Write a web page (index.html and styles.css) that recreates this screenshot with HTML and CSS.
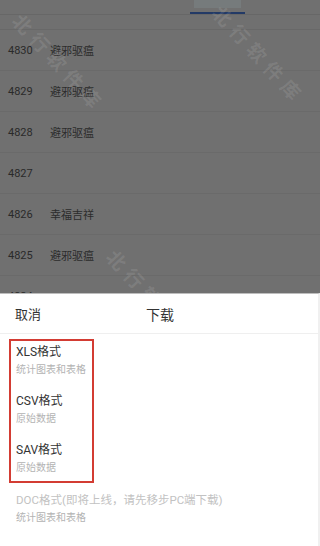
FILE: index.html
```html
<!DOCTYPE html>
<html lang="zh-CN">
<head>
<meta charset="utf-8">
<link rel="stylesheet" href="styles.css">
</head>
<body>
<div class="app">
  <div class="tabbar">
    <div class="tab-active"><span class="tab-label"></span><span class="tab-line"></span></div>
  </div>
  <div class="subbar"></div>
  <ul class="list">
    <li class="row"><span class="num">4830</span><span class="name">避邪驱瘟</span></li>
    <li class="row"><span class="num">4829</span><span class="name">避邪驱瘟</span></li>
    <li class="row"><span class="num">4828</span><span class="name">避邪驱瘟</span></li>
    <li class="row"><span class="num">4827</span><span class="name"></span></li>
    <li class="row"><span class="num">4826</span><span class="name">幸福吉祥</span></li>
    <li class="row"><span class="num">4825</span><span class="name">避邪驱瘟</span></li>
    <li class="row"><span class="num">4824</span><span class="name"></span></li>
  </ul>
  <div class="wm wm1">北行软件库</div>
  <div class="wm wm2">北行软件库</div>
  <div class="wm wm3">北行软件库</div>

  <div class="sheet">
    <div class="sheet-head">
      <span class="cancel">取消</span>
      <span class="title">下载</span>
    </div>
    <div class="sheet-body">
      <div class="highlight">
        <div class="opt"><div class="opt-title">XLS格式</div><div class="opt-sub">统计图表和表格</div></div>
        <div class="opt"><div class="opt-title">CSV格式</div><div class="opt-sub">原始数据</div></div>
        <div class="opt"><div class="opt-title">SAV格式</div><div class="opt-sub">原始数据</div></div>
      </div>
      <div class="opt opt-disabled"><div class="opt-title">DOC格式(即将上线，请先移步PC端下载)</div><div class="opt-sub">统计图表和表格</div></div>
    </div>
  </div>
</div>
</body>
</html>
```

FILE: styles.css
```css
* { box-sizing: border-box; }
html, body { margin: 0; padding: 0; }
body {
  width: 320px;
  height: 546px;
  overflow: hidden;
  font-family: Roboto, "Noto Sans CJK SC", sans-serif;
  background: #707070;
}
.app {
  position: relative;
  width: 320px;
  height: 546px;
  overflow: hidden;
  background: #707070;
}
.tabbar {
  height: 15px;
  border-bottom: 1px solid #676767;
  display: flex;
}
.tab-active {
  margin-left: 190px;
  width: 55px;
  display: flex;
  flex-direction: column;
  justify-content: space-between;
}
.tab-label {
  margin: 0 4px;
  height: 8px;
  background: #767b7c;
}
.tab-line {
  height: 2px;
  background: #233a66;
}
.subbar {
  height: 15px;
  border-bottom: 1px solid #686868;
}
.list {
  list-style: none;
  margin: 0;
  padding: 0;
}
.row {
  height: 41px;
  display: flex;
  align-items: center;
  border-bottom: 1px solid #6a6a6a;
  font-size: 11px;
  color: #2a2a2a;
}
.num {
  width: 50px;
  padding-left: 8px;
}
.name {
  font-size: 11px;
  color: #2c2c2c;
}
.wm {
  position: absolute;
  font-family: "Noto Sans CJK SC", sans-serif;
  font-size: 19px;
  font-weight: 700;
  letter-spacing: 6px;
  color: rgba(255, 255, 255, 0.11);
  transform: rotate(47deg);
  transform-origin: 0 0;
  white-space: nowrap;
  line-height: 1;
}
.wm1 { left: 24px; top: 10px; }
.wm2 { left: 224px; top: 2px; }
.wm3 { left: 118px; top: 246px; }

.sheet {
  position: absolute;
  left: 0;
  right: 0;
  top: 293px;
  bottom: 0;
  background: #ffffff;
  border-top: 1px solid #bdbdbd;
  border-right: 2px solid #f0f0f0;
  font-family: Roboto, "Noto Sans CJK SC", sans-serif;
}
.sheet-head {
  height: 40px;
  display: flex;
  align-items: center;
  border-bottom: 1px solid #efefef;
  padding-left: 15px;
}
.cancel {
  width: 131px;
  font-size: 13px;
  color: #333;
}
.title {
  font-size: 14px;
  color: #333;
}
.sheet-body {
  padding: 5px 0 0 9px;
}
.highlight {
  width: 85px;
  border: 2px solid #d33c33;
  padding: 2px 0 4px 5px;
  display: flex;
  flex-direction: column;
  gap: 13px;
}
.opt-title {
  font-size: 12px;
  line-height: 18px;
  color: #333;
  white-space: nowrap;
}
.opt-sub {
  font-size: 10px;
  line-height: 18px;
  color: #b3b3b3;
  white-space: nowrap;
}
.opt-disabled {
  margin-top: 8px;
  padding-left: 7px;
}
.opt-disabled .opt-title {
  font-size: 11.5px;
  color: #c2c2c2;
}
.opt-disabled .opt-sub {
  color: #b3b3b3;
}
```
